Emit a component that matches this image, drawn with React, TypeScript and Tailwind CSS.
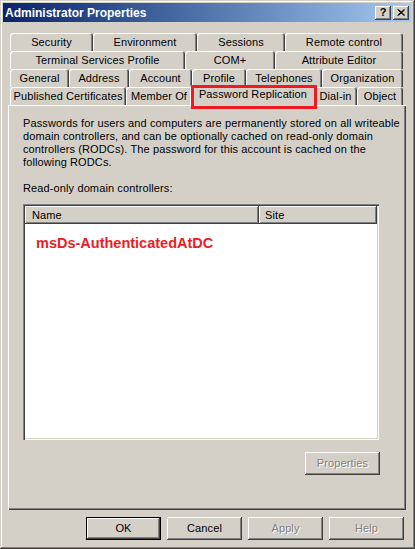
import React from 'react';

const raised =
  'bg-[#d4d0c8] shadow-[inset_-1px_-1px_#404040,inset_1px_1px_#ffffff,inset_-2px_-2px_#808080,inset_2px_2px_#d4d0c8]';
const tabEdge = 'shadow-[inset_1px_1px_#ffffff,inset_-1px_0_#404040,inset_-2px_0_#808080]';

type TabDef = { label: string; w: string };

const rows: TabDef[][] = [
  [
    { label: 'Security', w: 'w-[83px]' },
    { label: 'Environment', w: 'w-[104px]' },
    { label: 'Sessions', w: 'w-[88px]' },
    { label: 'Remote control', w: 'w-[118px]' },
  ],
  [
    { label: 'Terminal Services Profile', w: 'w-[175px]' },
    { label: 'COM+', w: 'w-[90px]' },
    { label: 'Attribute Editor', w: 'w-[128px]' },
  ],
  [
    { label: 'General', w: 'w-[59px]' },
    { label: 'Address', w: 'w-[60px]' },
    { label: 'Account', w: 'w-[63px]' },
    { label: 'Profile', w: 'w-[54px]' },
    { label: 'Telephones', w: 'w-[76px]' },
    { label: 'Organization', w: 'w-[81px]' },
  ],
];

const Tab = ({ label, w }: TabDef) => (
  <div className={`${w} h-[18px] shrink-0 rounded-t-[3px] bg-[#d4d0c8] ${tabEdge} flex items-center justify-center pt-[1px] whitespace-nowrap`}>
    {label}
  </div>
);

const Button = ({ label, disabled, isDefault }: { label: string; disabled?: boolean; isDefault?: boolean }) => (
  <div
    className={`w-[75px] h-[23px] flex items-center justify-center ${
      isDefault
        ? 'bg-[#d4d0c8] shadow-[inset_0_0_0_1px_#000000,inset_-2px_-2px_#404040,inset_2px_2px_#ffffff,inset_-3px_-3px_#808080]'
        : raised
    } ${disabled ? 'text-[#808080] [text-shadow:1px_1px_#ffffff]' : 'text-black'}`}
  >
    {label}
  </div>
);

export default function App() {
  return (
    <div className="w-[415px] h-[549px] bg-[#d4d0c8] p-[3px] shadow-[inset_-1px_-1px_#404040,inset_1px_1px_#d4d0c8,inset_-2px_-2px_#808080,inset_2px_2px_#ffffff] font-['Liberation_Sans',Arial,sans-serif] text-[11px] tracking-[0.12px] text-black leading-[13px] flex flex-col">
      {/* title bar */}
      <div className="h-[19px] w-[408px] bg-gradient-to-r from-[#0a246a] to-[#a6caf0] flex items-center pl-[2px] pr-[2px] tracking-normal">
        <span className="text-white font-bold text-[12px] flex-1 pt-[1px]">Administrator Properties</span>
        <div className={`w-[16px] h-[14px] ${raised} flex items-center justify-center font-bold text-[11px] leading-none`}>?</div>
        <div className={`w-[16px] h-[14px] ml-[2px] ${raised} flex items-center justify-center`}>
          <svg width="8" height="7" viewBox="0 0 8 7">
            <path d="M0.5 0.5 L7 6.5 M1.5 0.5 L8 6.5 M7 0.5 L0.5 6.5 M8 0.5 L1.5 6.5" stroke="#000" strokeWidth="1" />
          </svg>
        </div>
      </div>

      <div className="pl-[5px] pt-[11px]">
        {/* tab rows */}
        <div className="pl-[2px]">
          {rows.map((row, i) => (
            <div key={i} className="flex h-[18px]">
              {row.map((t) => (
                <Tab key={t.label} {...t} />
              ))}
            </div>
          ))}
          <div className="flex h-[18px]">
            <Tab label="Published Certificates" w="w-[116px]" />
            <Tab label="Member Of" w="w-[66px]" />
            <div className={`relative z-10 w-[126px] -mx-[2px] -mt-[2px] h-[21px] shrink-0 rounded-t-[3px] bg-[#d4d0c8] ${tabEdge} flex justify-center pt-[3px] whitespace-nowrap`}>
              Password Replication
              <div className="absolute left-[1px] top-0 w-[126px] h-[24px] border-[3px] border-[#ed1c24]" />
            </div>
            <Tab label="Dial-in" w="w-[43px]" />
            <Tab label="Object" w="w-[46px]" />
          </div>
        </div>

        {/* tab page */}
        <div className="w-[398px] h-[405px] bg-[#d4d0c8] shadow-[inset_1px_1px_#ffffff,inset_-1px_-1px_#404040,inset_-2px_-2px_#808080] pt-[12px] pl-[15px]">
          <p className="whitespace-nowrap">
            Passwords for users and computers are permanently stored on all writeable
            <br />
            domain controllers, and can be optionally cached on read-only domain
            <br />
            controllers (RODCs). The password for this account is cached on the
            <br />
            following RODCs.
          </p>
          <p className="mt-[13px]">Read-only domain controllers:</p>

          <div className="mt-[9px] w-[356px] h-[236px] bg-white p-[2px] shadow-[inset_1px_1px_#808080,inset_2px_2px_#404040,inset_-1px_-1px_#ffffff,inset_-2px_-2px_#d4d0c8] flex flex-col">
            <div className="flex h-[18px] shrink-0">
              <div className={`w-[234px] h-[18px] ${raised} pl-[7px] flex items-center`}>Name</div>
              <div className={`flex-1 h-[18px] ${raised} pl-[6px] flex items-center`}>Site</div>
            </div>
            <div className="pl-[11px] pt-[11px] font-bold text-[14.5px] leading-[16px] tracking-normal text-[#ed1c24]">
              msDs-AuthenticatedAtDC
            </div>
          </div>

          <div className="w-[357px] flex justify-end mt-[12px]">
            <Button label="Properties" disabled />
          </div>
        </div>

        {/* dialog buttons */}
        <div className="w-[396px] flex justify-end gap-[6px] mt-[7px]">
          <Button label="OK" isDefault />
          <Button label="Cancel" />
          <Button label="Apply" disabled />
          <Button label="Help" disabled />
        </div>
      </div>
    </div>
  );
}
